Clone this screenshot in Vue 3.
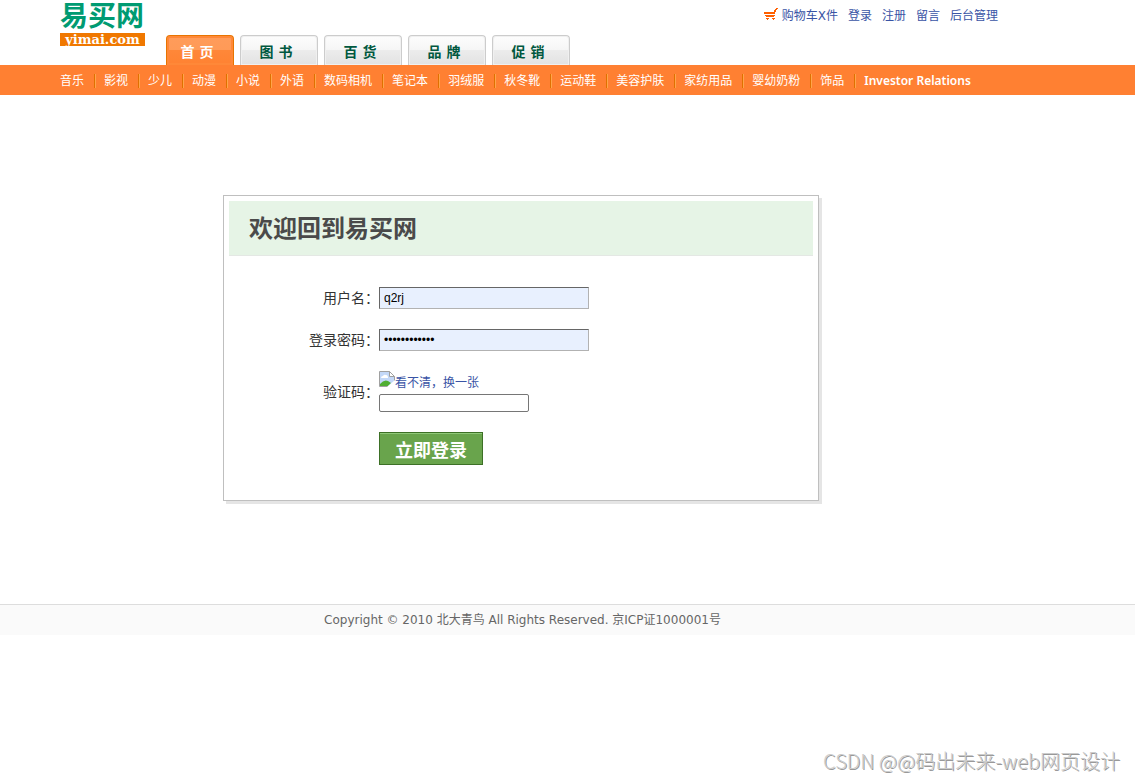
<script setup>
import { ref } from 'vue'

const tabs = ['首 页', '图 书', '百 货', '品 牌', '促 销']
const links = ['购物车X件', '登录', '注册', '留言', '后台管理']
const categories = ['音乐', '影视', '少儿', '动漫', '小说', '外语', '数码相机', '笔记本', '羽绒服', '秋冬靴', '运动鞋', '美容护肤', '家纺用品', '婴幼奶粉', '饰品', 'Investor Relations']

const userName = ref('q2rj')
const password = ref('123456789012')
const veryCode = ref('')
</script>

<template>
    <div class="page">
        <header class="header">
            <a class="logo" href="#">
                <span class="logo_name">易买网</span>
                <span class="logo_domain">yimai.com</span>
            </a>
            <nav class="tabs">
                <a v-for="(tab, idx) in tabs" :key="tab" href="#" class="tab" :class="{ current: idx === 0 }">{{ tab }}</a>
            </nav>
            <div class="help">
                <a v-for="(link, idx) in links" :key="link" href="#">
                    <svg v-if="idx === 0" class="cart" width="14" height="12" viewBox="0 0 14 12">
                        <path d="M0 4h10V2h1V1h1V0h2v1h-1v1h-1v2h-1v2H0z" />
                        <path d="M1 7h10v1h-1v1H2V8H1z" />
                        <path d="M2 10h3v1H4v1H3v-1H2zM8 10h3v1h-1v1H9v-1H8z" />
                    </svg>{{ link }}
                </a>
            </div>
        </header>
        <nav class="categories">
            <a v-for="item in categories" :key="item" href="#">{{ item }}</a>
        </nav>
        <main class="main">
            <div class="card">
                <h1>欢迎回到易买网</h1>
                <form class="login" @submit.prevent>
                    <label for="userName">用户名：</label>
                    <input id="userName" v-model="userName" class="text filled" type="text">
                    <label for="passWord">登录密码：</label>
                    <input id="passWord" v-model="password" class="text filled" type="password">
                    <label for="veryCode">验证码：</label>
                    <div class="code">
                        <a href="#">
                            <svg width="16" height="16" viewBox="0 0 16 16">
                                <path d="M.5.5h10l5 5v10H.5z" fill="#c3d8f8" stroke="#a0a0a0" />
                                <path d="M2 7q0-2 2-2q1-2 3-1q2 0 2 3z" fill="#fff" />
                                <path d="M1 15v-2q4-5 8-3l3 2-3 3z" fill="#4fae32" />
                                <path d="M10.500.5v5h5z" fill="#fff" stroke="#a0a0a0" />
                                <path d="M16 9v7H8z" fill="#fff" />
                            </svg>看不清，换一张
                        </a>
                        <input id="veryCode" v-model="veryCode" type="text">
                    </div>
                    <button type="submit">立即登录</button>
                </form>
            </div>
        </main>
        <footer class="footer">Copyright © 2010 北大青鸟 All Rights Reserved. 京ICP证1000001号</footer>
        <div class="watermark">CSDN @@码出未来-web网页设计</div>
    </div>
</template>

<style>
body {
    margin: 0;
    background: #fff;
}
</style>

<style scoped>
.page {
    position: relative;
    min-height: 100vh;
    font: 12px/18px "DejaVu Sans", "Noto Sans CJK SC", sans-serif;
    color: #333;
}
a {
    color: #3954a5;
    text-decoration: none;
}
.header {
    display: flex;
    height: 65px;
    padding: 0 137px 0 60px;
}
.logo {
    width: 85px;
    margin-right: 21px;
}
.logo_name {
    display: block;
    color: #009b72;
    font: bold 28px/33px "DejaVu Sans", "Noto Sans CJK SC", sans-serif;
    white-space: nowrap;
}
.logo_domain {
    display: block;
    background: #f07800;
    color: #fff;
    font: bold 13px/13px "DejaVu Serif", serif;
    text-align: center;
}
.tabs {
    display: flex;
    align-items: flex-end;
    gap: 6px;
}
.tab {
    box-sizing: border-box;
    width: 78px;
    height: 30px;
    padding-right: 6px;
    border: 1px solid #ccc;
    border-bottom: 0;
    border-radius: 4px 4px 0 0;
    background: linear-gradient(#fdfdfd 0, #f5f5f5 50%, #ececec 50%, #e2e2e2 100%);
    box-shadow: inset 0 0 0 1px #f0f0f0;
    color: #00583f;
    font-size: 14px;
    font-weight: bold;
    line-height: 32px;
    text-align: center;
}
.tab.current {
    width: 68px;
    border-color: #e87400;
    background: linear-gradient(#ff9c5b 0, #ff9a57 50%, #ff8738 50%, #ff8232 100%);
    box-shadow: inset 0 0 0 2px #ff8838;
    color: #fff;
}
.help {
    display: flex;
    gap: 10px;
    margin-left: auto;
    padding-top: 7px;
    white-space: nowrap;
}
.cart {
    margin-right: 4px;
    fill: #ff6000;
}
.categories {
    display: flex;
    align-items: center;
    height: 30px;
    padding-left: 60px;
    background: #ff8032;
    line-height: 20px;
    white-space: nowrap;
}
.categories a {
    padding-top: 2px;
    color: #fff;
    font-family: "Noto Sans", "Noto Sans CJK SC", sans-serif;
}
.categories a:last-child {
    font-weight: 600;
}
.categories a:not(:last-child)::after {
    content: "";
    display: inline-block;
    width: 1px;
    height: 14px;
    margin: 0 8px 0 10px;
    border-right: 1px solid #ffa54a;
    background: #e07000;
    vertical-align: -3px;
}
.main {
    padding: 100px 93px 103px 0;
}
.card {
    box-sizing: border-box;
    max-width: 596px;
    margin: 0 auto;
    padding: 5px;
    border: 1px solid #bfbfbf;
    background: #fff;
    box-shadow: 3px 3px 0 #e5e5e5;
}
h1 {
    margin: 0;
    padding: 2px 20px 0;
    border-bottom: 1px solid #e4e8e4;
    background: #e6f4e6;
    color: #4a4a4a;
    font-size: 24px;
    line-height: 52px;
}
.login {
    display: grid;
    grid-template-columns: 150px 1fr;
    gap: 20px 0;
    align-items: center;
    justify-items: start;
    padding: 31px 0 30px;
}
.login label {
    justify-self: end;
    font-size: 14px;
}
.text {
    box-sizing: border-box;
    width: 210px;
    height: 22px;
    padding: 0 4px;
    border: 1px solid;
    border-color: #666 #b2b2b2 #b2b2b2 #666;
    color: #000;
    font: 12px "Liberation Sans", sans-serif;
}
.filled {
    background: #e8f0fe;
}
.code {
    display: flex;
    flex-direction: column;
    gap: 1px;
}
.code a {
    display: flex;
    height: 22px;
    line-height: 24px;
}
.code input {
    box-sizing: border-box;
    width: 150px;
    height: 18px;
    border: 1px solid #767676;
    border-radius: 2px;
}
.login button {
    grid-column: 2;
    width: 104px;
    height: 33px;
    padding: 0;
    border: 1px solid #3d7026;
    background: #69a44c;
    box-shadow: inset 0 1px 0 #8fc878;
    color: #fff;
    font: bold 18px/30px "Noto Sans CJK SC", sans-serif;
}
.footer {
    padding: 6px 90px 6px 0;
    border-top: 1px solid #ddd;
    background: #fafafa;
    color: #666;
    text-align: center;
}
.watermark {
    position: absolute;
    right: 15px;
    bottom: 5px;
    color: #ccc;
    font: 300 20px/28px "Noto Sans CJK SC", sans-serif;
    text-shadow: 1px 1px 0 #999;
}
</style>
